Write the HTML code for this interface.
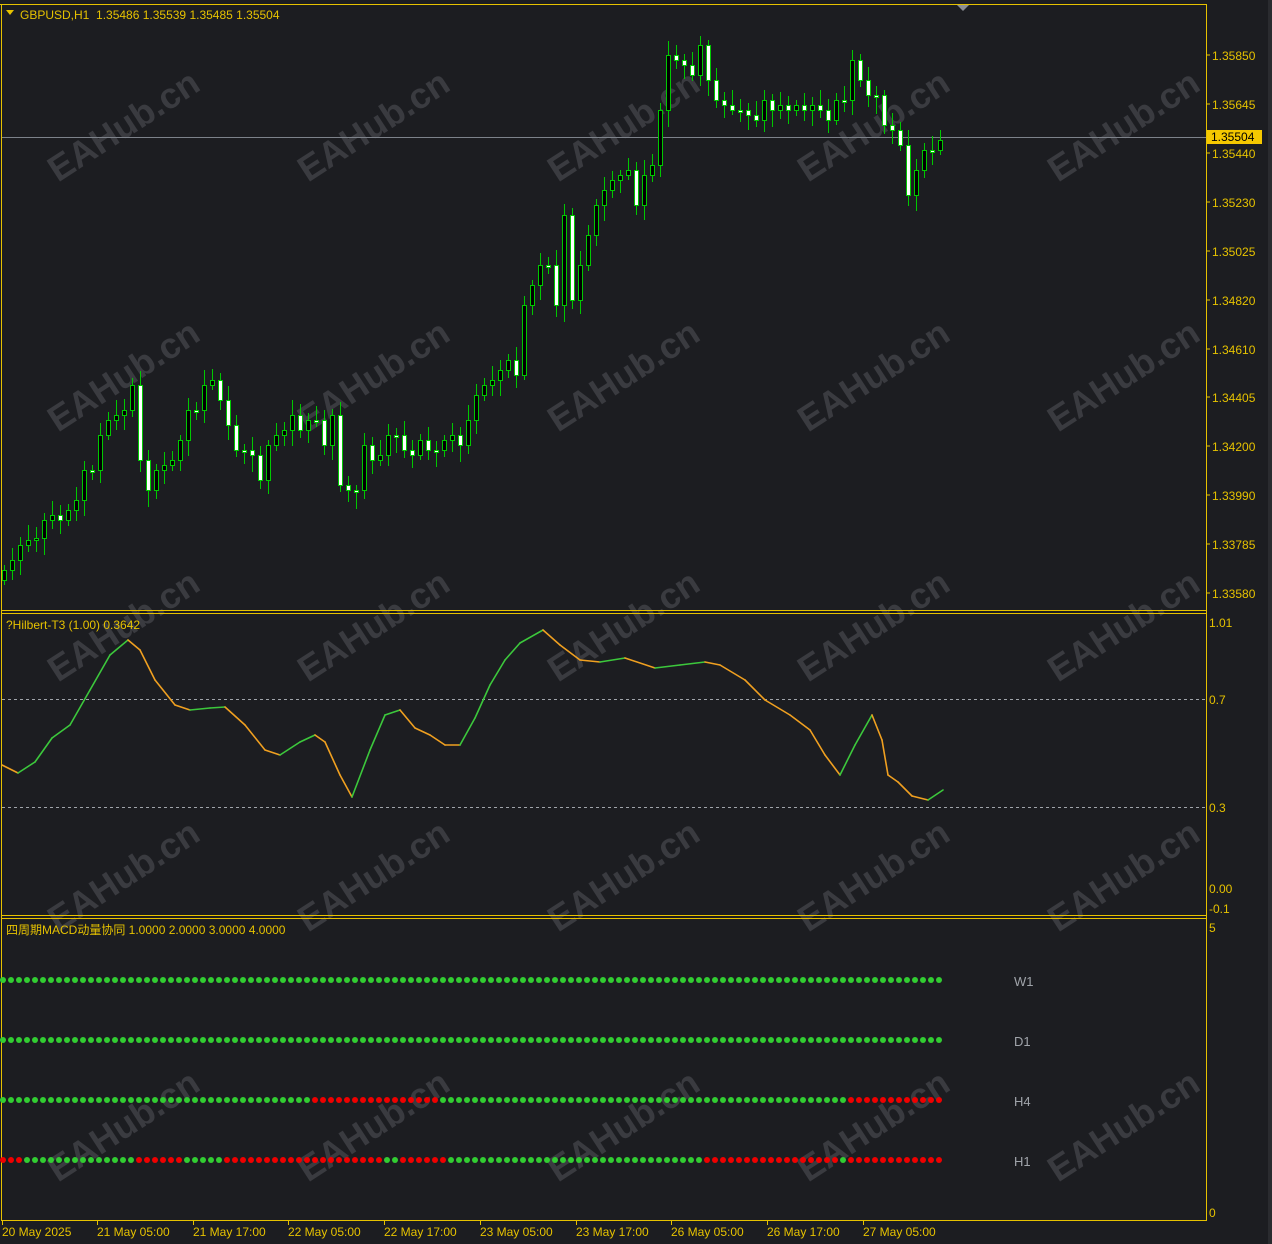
<!DOCTYPE html>
<html><head><meta charset="utf-8">
<style>
html,body{margin:0;padding:0;background:#1c1d21;}
body{width:1272px;height:1244px;overflow:hidden;position:relative;font-family:"Liberation Sans","Noto Sans CJK SC",sans-serif;}
svg{position:absolute;left:0;top:0;}
</style></head><body>
<svg id="s" width="1272" height="1244" xmlns="http://www.w3.org/2000/svg" font-family="Liberation Sans, Noto Sans CJK SC, sans-serif">
<rect x="0" y="0" width="1272" height="1244" fill="#1c1d21"/>
<rect x="1268" y="0" width="4" height="1244" fill="#2a2b2f"/>
<g id="wm" fill="#3a3b40" font-size="36" font-weight="bold"></g>
<g id="g"></g>
</svg>
<script>
(function(){
var s=document.getElementById('g'),wm=document.getElementById('wm'),h='';
var Y='#e6c200';
var w='';
[125,375,625,875,1125].forEach(function(cy){[123,373,623,873,1123].forEach(function(cx){
w+='<text x="'+cx+'" y="'+(cy+13)+'" text-anchor="middle" transform="rotate(-33 '+cx+' '+cy+')">EAHub.cn</text>';});});
wm.innerHTML=w;
h+='<line x1="0" y1="4.5" x2="1206" y2="4.5" stroke="'+Y+'"/>';
h+='<line x1="1.5" y1="4" x2="1.5" y2="1220" stroke="'+Y+'"/>';
h+='<line x1="1206.5" y1="4" x2="1206.5" y2="1221" stroke="'+Y+'"/>';
[610.5,613.5,915.5,918.5,1220.5].forEach(function(y){h+='<line x1="1" y1="'+y+'" x2="1207" y2="'+y+'" stroke="'+Y+'"/>';});
h+='<polygon points="957,5 969,5 963,11" fill="#8a8d94"/>';
var pl=[['1.35850',55],['1.35645',104],['1.35440',153],['1.35230',202],['1.35025',251],['1.34820',300],['1.34610',349],['1.34405',397],['1.34200',446],['1.33990',495],['1.33785',544],['1.33580',593]];
pl.forEach(function(p){h+='<line x1="1207" y1="'+p[1]+'" x2="1210" y2="'+p[1]+'" stroke="'+Y+'"/><text x="1212" y="'+(p[1]+5)+'" font-size="12" fill="'+Y+'">'+p[0]+'</text>';});
h+='<line x1="2" y1="137.5" x2="1206" y2="137.5" stroke="#7d828a" stroke-width="1"/>';
h+='<rect x="1207" y="130" width="55" height="14" fill="#f5c800"/><text x="1211" y="141" font-size="12" fill="#000">1.35504</text>';
h+='<polygon points="6,10 14,10 10,15" fill="'+Y+'"/>';
h+='<text x="20" y="19" font-size="12" fill="'+Y+'">GBPUSD,H1&#160; 1.35486 1.35539 1.35485 1.35504</text>';
var c=[570,560,545,540,538,520,515,520,510,500,470,470,435,420,415,410,385,460,490,470,465,460,440,410,410,385,380,400,425,450,450,455,480,445,435,430,415,430,420,420,445,415,485,490,490,445,460,455,435,435,450,455,440,450,450,440,435,445,420,395,385,380,370,360,375,305,285,265,265,305,215,300,265,235,205,190,180,175,170,205,175,165,110,55,60,65,75,45,80,100,105,110,110,115,120,100,110,105,110,105,110,105,110,120,100,100,60,80,95,95,125,130,145,195,170,150,150,140];
var prev=580;
for(var i=0;i<c.length;i++){
 var x=4+8*i,o=prev,cl=c[i];var bt=Math.min(o,cl),bb=Math.max(o,cl);
 if(bb-bt<2){bb=bt+2;}
 var hi=bt-5-(i*7%11),lo=bb+5+(i*5%13);
 h+='<line x1="'+(x+0.5)+'" y1="'+hi+'" x2="'+(x+0.5)+'" y2="'+lo+'" stroke="#00c800"/>';
 var bull=cl<o;
 h+='<rect x="'+(x-1.5)+'" y="'+(bt+0.5)+'" width="4" height="'+(bb-bt)+'" fill="'+(bull?'#000':'#fff')+'" stroke="#00c800" stroke-width="1"/>';
 prev=cl;}
h+='<text x="6" y="629" font-size="12" fill="'+Y+'">?Hilbert-T3 (1.00) 0.3642</text>';
[[699,'0.7'],[807,'0.3']].forEach(function(p){h+='<line x1="2" y1="'+(p[0]+.5)+'" x2="1206" y2="'+(p[0]+.5)+'" stroke="#a0a4aa" stroke-dasharray="3,3"/><text x="1209" y="'+(p[0]+5)+'" font-size="12" fill="'+Y+'">'+p[1]+'</text>';});
h+='<text x="1209" y="627" font-size="12" fill="'+Y+'">1.01</text><text x="1209" y="893" font-size="12" fill="'+Y+'">0.00</text><text x="1209" y="913" font-size="12" fill="'+Y+'">-0.1</text>';
var P=[[2,765],[18,773],[35,762],[52,738],[70,725],[90,690],[110,655],[128,640],[140,650],[155,680],[175,705],[190,710],[210,708],[225,707],[245,725],[265,750],[280,755],[300,742],[315,735],[325,742],[340,775],[352,797],[370,750],[385,715],[400,710],[415,728],[430,735],[445,745],[460,745],[475,718],[490,685],[505,660],[520,643],[543,630],[560,645],[580,660],[600,662],[625,658],[655,668],[680,665],[705,662],[720,665],[745,680],[765,700],[790,715],[810,730],[825,755],[840,775],[855,745],[872,715],[882,740],[888,775],[898,782],[912,796],[928,800],[943,790]];
for(var j=1;j<P.length;j++){var a=P[j-1],b=P[j];h+='<line x1="'+a[0]+'" y1="'+a[1]+'" x2="'+b[0]+'" y2="'+b[1]+'" stroke="'+(b[1]<a[1]?'#3cc83c':'#f0a020')+'" stroke-width="1.6" stroke-linecap="round"/>';}
h+='<text x="6" y="934" font-size="12" fill="'+Y+'">四周期MACD动量协同 1.0000 2.0000 3.0000 4.0000</text>';
h+='<text x="1209" y="932" font-size="12" fill="'+Y+'">5</text><text x="1209" y="1217" font-size="12" fill="'+Y+'">0</text>';
var rows=[[980,'W1',[]],[1040,'D1',[]],[1100,'H4',[[308,437],[850,945]]],[1160,'H1',[[0,21],[134,183],[222,380],[396,446],[700,842],[850,945]]]];
rows.forEach(function(r){
 for(var x=3;x<=943;x+=8){var red=false;r[2].forEach(function(q){if(x>=q[0]&&x<=q[1])red=true;});
 h+='<circle cx="'+x+'" cy="'+r[0]+'" r="3" fill="'+(red?'#f00000':'#32cd32')+'"/>';}
 h+='<text x="1014" y="'+(r[0]+6)+'" font-size="13" fill="#a0a4aa">'+r[1]+'</text>';});
var tl=[[2,'20 May 2025'],[97,'21 May 05:00'],[193,'21 May 17:00'],[288,'22 May 05:00'],[384,'22 May 17:00'],[480,'23 May 05:00'],[576,'23 May 17:00'],[671,'26 May 05:00'],[767,'26 May 17:00'],[863,'27 May 05:00']];
tl.forEach(function(t){h+='<line x1="'+(t[0]+.5)+'" y1="1221" x2="'+(t[0]+.5)+'" y2="1225" stroke="'+Y+'"/><text x="'+t[0]+'" y="1236" font-size="12" fill="'+Y+'">'+t[1]+'</text>';});
s.innerHTML=h;
})();
</script>
</body></html>
